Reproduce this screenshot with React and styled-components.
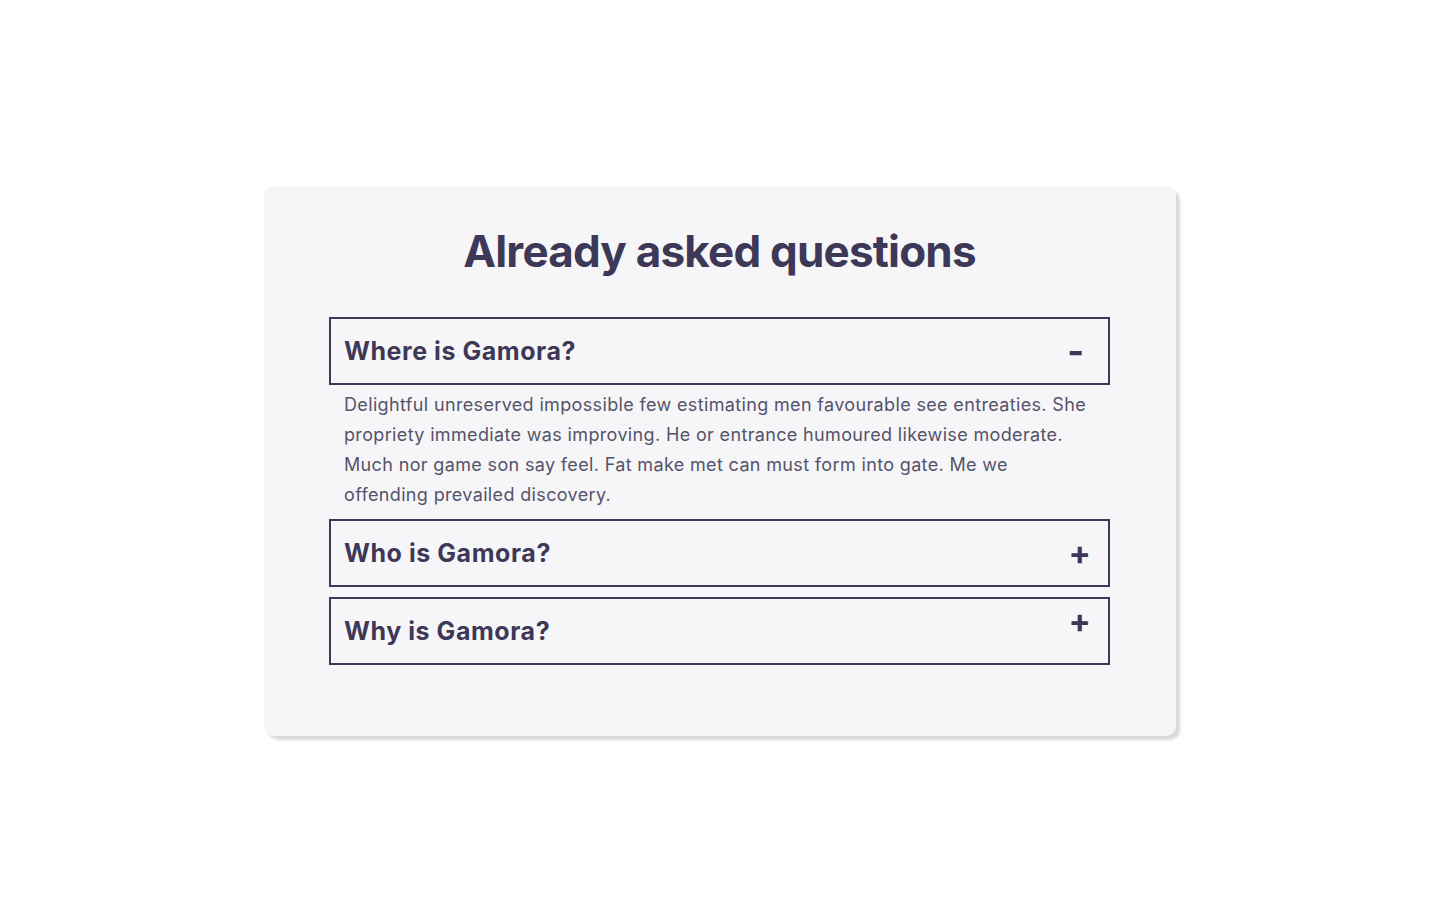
import React, { useState } from "react";
import styled, { createGlobalStyle } from "styled-components";

const questions = [
  {
    id: 1,
    title: "Where is Gamora?",
    answer:
      "Delightful unreserved impossible few estimating men favourable see entreaties. She propriety immediate was improving. He or entrance humoured likewise moderate. Much nor game son say feel. Fat make met can must form into gate. Me we offending prevailed discovery.",
    shift: 0,
  },
  {
    id: 2,
    title: "Who is Gamora?",
    answer:
      "Delightful unreserved impossible few estimating men favourable see entreaties. She propriety immediate was improving.",
    shift: 0,
  },
  {
    id: 3,
    title: "Why is Gamora?",
    answer:
      "Much nor game son say feel. Fat make met can must form into gate. Me we offending prevailed discovery.",
    shift: -10,
  },
];

function App() {
  const [openId, setOpenId] = useState(1);

  return (
    <>
      <GlobalStyle />
      <Page>
        <Card>
          <Title>Already asked questions</Title>
          <List>
            {questions.map((q) => {
              const open = openId === q.id;
              return (
                <Item key={q.id}>
                  <Header onClick={() => setOpenId(open ? null : q.id)}>
                    <Question>{q.title}</Question>
                    {open ? (
                      <Minus>-</Minus>
                    ) : (
                      <Plus $shift={q.shift}>+</Plus>
                    )}
                  </Header>
                  {open && <Answer>{q.answer}</Answer>}
                </Item>
              );
            })}
          </List>
        </Card>
      </Page>
    </>
  );
}

export default App;

const GlobalStyle = createGlobalStyle`
  * { box-sizing: border-box; }
  body {
    margin: 0;
    background: #ffffff;
    font-family: Inter, "Noto Sans", sans-serif;
  }
`;

const Page = styled.div`
  min-height: 100vh;
  display: flex;
  align-items: center;
  justify-content: center;
`;

const Card = styled.div`
  width: 912px;
  height: 550px;
  margin-top: -2px;
  background: #f6f6f8;
  border-radius: 10px;
  box-shadow: 4px 4px 3px #d9d9de;
  padding: 37px 66px 0 65px;
`;

const Title = styled.h1`
  margin: 0 0 38px;
  text-align: center;
  font-size: 44px;
  line-height: 56px;
  font-weight: 700;
  letter-spacing: -0.8px;
  color: #3d3857;
`;

const List = styled.div`
  display: flex;
  flex-direction: column;
  gap: 10px;
`;

const Item = styled.div``;

const Header = styled.div`
  height: 68px;
  border: 2px solid #3d3857;
  display: flex;
  align-items: center;
  justify-content: space-between;
  padding: 0 20px 0 13px;
  cursor: pointer;
`;

const Question = styled.span`
  font-size: 25px;
  font-weight: 700;
  letter-spacing: 0.55px;
  color: #3d3857;
`;

const Minus = styled.span`
  font-size: 36px;
  font-weight: 700;
  line-height: 1;
  color: #3d3857;
  margin-right: 4px;
`;

const Plus = styled.span`
  font-size: 33px;
  font-weight: 700;
  line-height: 1;
  color: #3d3857;
  margin-right: -3px;
  position: relative;
  top: ${(p) => p.$shift}px;
`;

const Answer = styled.p`
  margin: 0;
  padding: 5px 20px 0 15px;
  margin-bottom: -1px;
  font-size: 18px;
  line-height: 30px;
  letter-spacing: 0.35px;
  color: #55536a;
`;
